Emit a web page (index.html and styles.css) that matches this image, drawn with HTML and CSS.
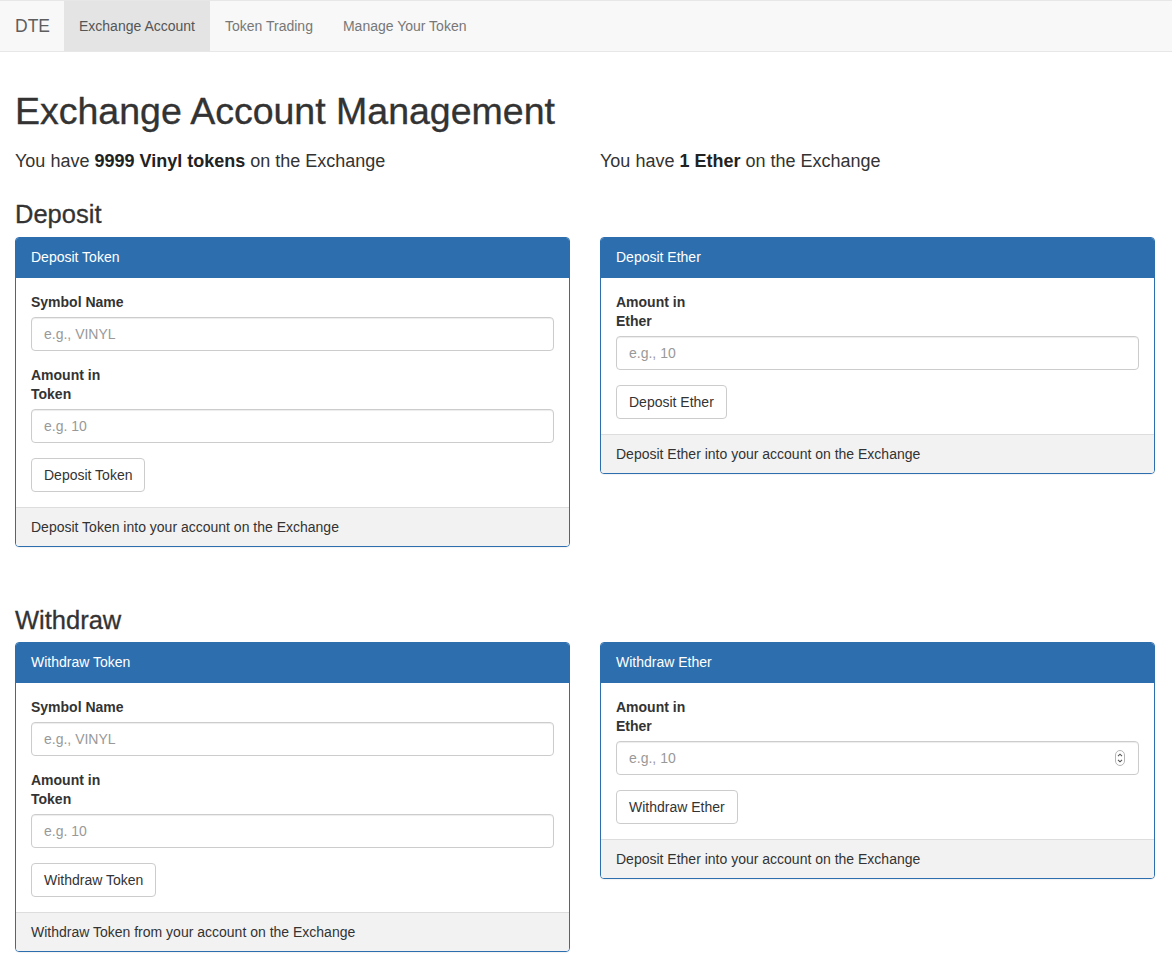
FILE: index.html
```html
<!DOCTYPE html>
<html lang="en">
<head>
<meta charset="utf-8">
<title>DTE - Exchange Account</title>
<link rel="stylesheet" href="styles.css">
</head>
<body>
<nav class="navbar">
  <a class="brand" href="#">DTE</a>
  <ul class="nav">
    <li class="active"><a href="#">Exchange Account</a></li>
    <li><a href="#">Token Trading</a></li>
    <li><a href="#">Manage Your Token</a></li>
  </ul>
</nav>

<main class="container">
  <h1>Exchange Account Management</h1>
  <div class="row">
    <h4>You have <strong>9999 Vinyl tokens</strong> on the Exchange</h4>
    <h4>You have <strong>1 Ether</strong> on the Exchange</h4>
  </div>

  <h3>Deposit</h3>
  <div class="row">
    <section class="panel">
      <div class="panel-heading">Deposit Token</div>
      <div class="panel-body">
        <div class="form-group">
          <label>Symbol Name</label>
          <input class="form-control" type="text" placeholder="e.g., VINYL">
        </div>
        <div class="form-group">
          <label class="label-narrow">Amount in Token</label>
          <input class="form-control" type="text" placeholder="e.g. 10">
        </div>
        <button class="btn" type="button">Deposit Token</button>
      </div>
      <div class="panel-footer">Deposit Token into your account on the Exchange</div>
    </section>
    <section class="panel">
      <div class="panel-heading">Deposit Ether</div>
      <div class="panel-body">
        <div class="form-group">
          <label class="label-narrow">Amount in Ether</label>
          <input class="form-control" type="text" placeholder="e.g., 10">
        </div>
        <button class="btn" type="button">Deposit Ether</button>
      </div>
      <div class="panel-footer">Deposit Ether into your account on the Exchange</div>
    </section>
  </div>

  <div class="spacer"></div>

  <h3>Withdraw</h3>
  <div class="row">
    <section class="panel">
      <div class="panel-heading">Withdraw Token</div>
      <div class="panel-body">
        <div class="form-group">
          <label>Symbol Name</label>
          <input class="form-control" type="text" placeholder="e.g., VINYL">
        </div>
        <div class="form-group">
          <label class="label-narrow">Amount in Token</label>
          <input class="form-control" type="text" placeholder="e.g. 10">
        </div>
        <button class="btn" type="button">Withdraw Token</button>
      </div>
      <div class="panel-footer">Withdraw Token from your account on the Exchange</div>
    </section>
    <section class="panel">
      <div class="panel-heading">Withdraw Ether</div>
      <div class="panel-body">
        <div class="form-group">
          <label class="label-narrow">Amount in Ether</label>
          <div class="input-wrap">
            <input class="form-control" type="text" placeholder="e.g., 10">
            <svg class="spinner" width="10" height="16" viewBox="0 0 10 16" aria-hidden="true">
              <rect x="0.5" y="0.5" width="9" height="15" rx="4.5" fill="#fff" stroke="#b5b5b5"/>
              <path d="M3 6.2 L5 4.2 L7 6.2" fill="none" stroke="#555" stroke-width="1.1"/>
              <path d="M3 9.8 L5 11.8 L7 9.8" fill="none" stroke="#555" stroke-width="1.1"/>
            </svg>
          </div>
        </div>
        <button class="btn" type="button">Withdraw Ether</button>
      </div>
      <div class="panel-footer">Deposit Ether into your account on the Exchange</div>
    </section>
  </div>
</main>
</body>
</html>
```

FILE: styles.css
```css
html {
  scrollbar-width: none;
}
html::-webkit-scrollbar {
  display: none;
}

* {
  box-sizing: border-box;
}

body {
  margin: 0;
  font-family: "Liberation Sans", Arial, Helvetica, sans-serif;
  font-size: 14px;
  line-height: 20px;
  color: #333;
  background: #fff;
}

/* Navbar */
.navbar {
  display: flex;
  align-items: stretch;
  height: 52px;
  background: #f8f8f8;
  border: 1px solid #e7e7e7;
  border-left: 0;
  border-right: 0;
  margin-bottom: 20px;
}

.brand {
  display: block;
  padding: 15px 14px 15px 15px;
  font-size: 17.5px;
  line-height: 20px;
  color: #5e5e5e;
  text-decoration: none;
}

.nav {
  display: flex;
  list-style: none;
  margin: 0;
  padding: 0;
}

.nav li a {
  display: block;
  padding: 15px;
  line-height: 20px;
  color: #777;
  text-decoration: none;
}

.nav li.active a {
  background: #e4e4e4;
  color: #555;
}

/* Content */
.container {
  display: flow-root;
  padding: 0 17px 0 15px;
}

h1 {
  font-size: 37.5px;
  font-weight: 500;
  line-height: 39.6px;
  margin: 20px 0 10px;
  color: #333;
  -webkit-text-stroke: 0.35px #333;
}

h3 {
  font-size: 25.5px;
  font-weight: 500;
  line-height: 26.4px;
  margin: 20px 0 9px;
  color: #333;
  -webkit-text-stroke: 0.3px #333;
}

h4 {
  font-size: 18px;
  font-weight: 500;
  line-height: 19.8px;
  margin: 10px 0;
  color: #333;
}

h4 strong {
  font-weight: 700;
  color: #222;
}

.row {
  display: grid;
  grid-template-columns: 1fr 1fr;
  column-gap: 30px;
  align-items: start;
}

.spacer {
  height: 20px;
}

/* Panels */
.panel {
  border: 1px solid #2d6fae;
  border-radius: 4px;
  margin-bottom: 20px;
  background: #fff;
  box-shadow: 0 1px 1px rgba(0, 0, 0, 0.05);
  overflow: hidden;
}

.panel-heading {
  background: #2d6fae;
  color: #fff;
  padding: 10px 15px;
  line-height: 19px;
  border-bottom: 1px solid #2d6fae;
}

.panel-body {
  padding: 15px;
}

.panel-footer {
  background: #f2f2f2;
  border-top: 1px solid #ddd;
  padding: 10px 15px 9px;
  line-height: 19px;
}

.form-group {
  margin-bottom: 15px;
}

label {
  display: block;
  font-weight: 700;
  margin-bottom: 5px;
  line-height: 19px;
  color: #333;
}

.label-narrow {
  max-width: 80px;
}

.form-control {
  display: block;
  width: 100%;
  height: 34px;
  padding: 6px 12px;
  font-family: inherit;
  font-size: 14px;
  line-height: 20px;
  color: #555;
  background: #fff;
  border: 1px solid #ccc;
  border-radius: 4px;
  box-shadow: inset 0 1px 1px rgba(0, 0, 0, 0.075);
  outline: none;
}

.form-control::placeholder {
  color: #999;
}

.input-wrap {
  position: relative;
}

.spinner {
  position: absolute;
  right: 14px;
  top: 9px;
}

.btn {
  display: inline-block;
  height: 34px;
  padding: 6px 12px;
  font-family: inherit;
  font-size: 14px;
  line-height: 20px;
  color: #333;
  background: #fff;
  border: 1px solid #ccc;
  border-radius: 4px;
  cursor: pointer;
}
```
